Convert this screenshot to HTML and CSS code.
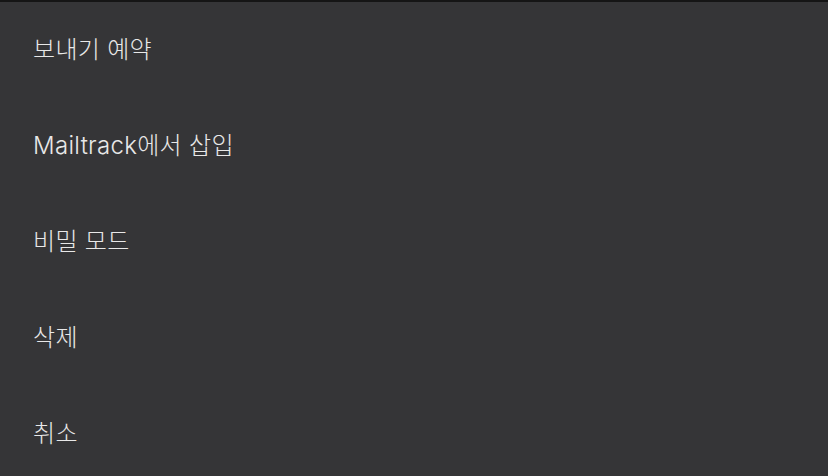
FILE: index.html
```html
<!DOCTYPE html>
<html lang="ko">
<head>
    <meta charset="UTF-8">
    <meta name="viewport" content="width=device-width, initial-scale=1.0">
    <title>Send options</title>
    <link rel="stylesheet" href="styles.css">
</head>
<body>
    <div class="sheet">
        <div class="sheet-item">보내기 예약</div>
        <div class="sheet-item">Mailtrack에서 삽입</div>
        <div class="sheet-item">비밀 모드</div>
        <div class="sheet-item">삭제</div>
        <div class="sheet-item">취소</div>
    </div>
</body>
</html>
```

FILE: styles.css
```css
html, body {
    margin: 0;
    padding: 0;
    height: 100%;
    background-color: #353537;
}
body {
    font-family: Inter, 'Noto Sans CJK KR', sans-serif;
    color: #e8e8e8;
}
.sheet {
    border-top: 2px solid #151515;
    display: flex;
    flex-direction: column;
}
.sheet-item {
    height: 96.2px;
    display: flex;
    align-items: center;
    padding-left: 33px;
    font-size: 24px;
    font-weight: 300;
    letter-spacing: 0.3px;
}
.sheet-item:first-child {
    margin-top: -3px;
}
```
